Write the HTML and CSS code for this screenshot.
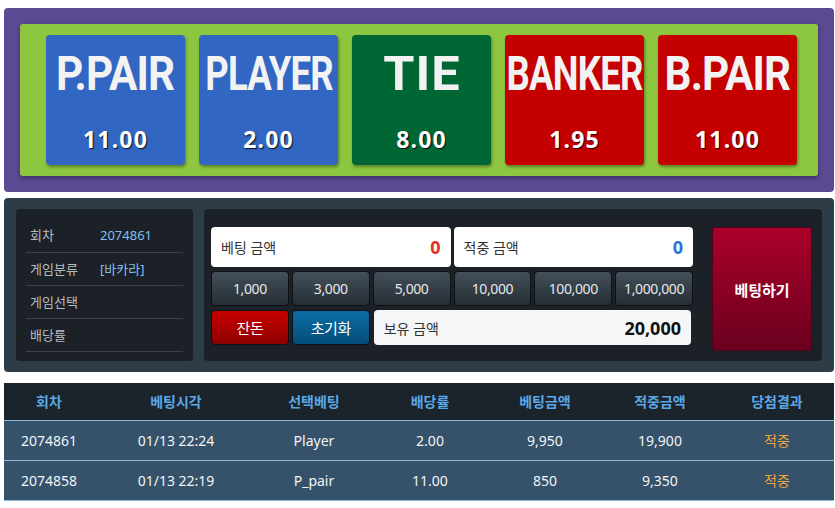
FILE: index.html
```html
<!DOCTYPE html>
<html lang="ko">
<head>
  <meta charset="UTF-8">
  <title>Baccarat Betting</title>
  <link rel="stylesheet" href="styles.css">
</head>
<body>

  <div class="board">
    <div class="board-inner">
      <div class="pick pick-blue">
        <div class="pick-name"><span class="squeeze pair">P.PAIR</span></div>
        <div class="pick-rate">11.00</div>
      </div>
      <div class="pick pick-blue">
        <div class="pick-name"><span class="squeeze">PLAYER</span></div>
        <div class="pick-rate">2.00</div>
      </div>
      <div class="pick pick-green">
        <div class="pick-name"><span class="squeeze wide">TIE</span></div>
        <div class="pick-rate">8.00</div>
      </div>
      <div class="pick pick-red">
        <div class="pick-name"><span class="squeeze">BANKER</span></div>
        <div class="pick-rate">1.95</div>
      </div>
      <div class="pick pick-red">
        <div class="pick-name"><span class="squeeze pair">B.PAIR</span></div>
        <div class="pick-rate">11.00</div>
      </div>
    </div>
  </div>

  <div class="bet-panel">
    <div class="info-card">
      <div class="info-row"><span class="info-label">회차</span><span class="info-value">2074861</span></div>
      <div class="info-row"><span class="info-label">게임분류</span><span class="info-value">[바카라]</span></div>
      <div class="info-row"><span class="info-label">게임선택</span><span class="info-value"></span></div>
      <div class="info-row"><span class="info-label">배당률</span><span class="info-value"></span></div>
    </div>

    <div class="slip-card">
      <div class="slip-grid">
        <div class="amount-box span-3"><span>베팅 금액</span><b class="val-red">0</b></div>
        <div class="amount-box span-3"><span>적중 금액</span><b class="val-blue">0</b></div>

        <button class="chip">1,000</button>
        <button class="chip">3,000</button>
        <button class="chip">5,000</button>
        <button class="chip">10,000</button>
        <button class="chip">100,000</button>
        <button class="chip">1,000,000</button>

        <button class="chip chip-red">잔돈</button>
        <button class="chip chip-blue">초기화</button>
        <div class="amount-box hold span-4"><span>보유 금액</span><b>20,000</b></div>
      </div>
      <button class="bet-btn">베팅하기</button>
    </div>
  </div>

  <table class="history">
    <colgroup>
      <col style="width:90px"><col style="width:164px"><col style="width:112px"><col style="width:120px">
      <col style="width:110px"><col style="width:120px"><col style="width:114px">
    </colgroup>
    <thead>
      <tr>
        <th>회차</th><th>베팅시각</th><th>선택베팅</th><th>배당률</th><th>베팅금액</th><th>적중금액</th><th>당첨결과</th>
      </tr>
    </thead>
    <tbody>
      <tr>
        <td>2074861</td><td>01/13 22:24</td><td>Player</td><td>2.00</td><td>9,950</td><td>19,900</td><td class="win">적중</td>
      </tr>
      <tr>
        <td>2074858</td><td>01/13 22:19</td><td>P_pair</td><td>11.00</td><td>850</td><td>9,350</td><td class="win">적중</td>
      </tr>
    </tbody>
  </table>

</body>
</html>
```

FILE: styles.css
```css
* {
  box-sizing: border-box;
  margin: 0;
  padding: 0;
}

body {
  font-family: "Noto Sans", "Noto Sans CJK KR", sans-serif;
  background: #fff;
  padding: 8px 1px 0 4px;
  color: #333;
}

/* top odds board */
.board {
  background-color: #594a93;
  border-radius: 4px;
  padding: 16px;
  height: 184px;
}

.board-inner {
  background-color: #8dc63f;
  border-radius: 3px;
  box-shadow: 0 2px 4px rgba(0, 0, 0, 0.35);
  height: 152px;
  display: flex;
  gap: 14px;
  padding: 11px 21px 11px 26px;
}

.pick {
  width: 139px;
  height: 130px;
  border-radius: 4px;
  box-shadow: 1px 2px 3px rgba(0, 0, 0, 0.35);
  display: flex;
  flex-direction: column;
  align-items: center;
  color: #f2f2f2;
}

.pick-blue { background-color: #3166c2; }
.pick-green { background-color: #006633; }
.pick-red { background-color: #c40000; }

.pick-name {
  height: 76px;
  display: flex;
  align-items: center;
  justify-content: center;
  font-family: Roboto, sans-serif;
  font-weight: 700;
  font-size: 48px;
  letter-spacing: -1px;
}

.squeeze {
  display: inline-block;
  transform: scaleX(0.76);
  white-space: nowrap;
}

.squeeze.pair {
  transform: scaleX(0.88);
}

.squeeze.wide {
  transform: scaleX(1.05);
  letter-spacing: 1px;
}

.pick-rate {
  font-size: 23px;
  font-weight: 700;
  letter-spacing: 1.2px;
  color: #fff;
  text-shadow: 1px 1px 1px rgba(0, 0, 0, 0.85);
  margin-top: 12px;
}

/* bet panel */
.bet-panel {
  margin-top: 6px;
  background-color: #2e3c47;
  border-radius: 4px;
  height: 174px;
  padding: 11px 12px;
  display: flex;
  gap: 11px;
}

.info-card {
  width: 178px;
  background-color: #1c2127;
  border-radius: 4px;
  padding: 10px 10px 0;
}

.info-row {
  height: 33px;
  border-bottom: 1px solid #3a4249;
  display: flex;
  align-items: center;
  font-size: 13px;
  padding-left: 4px;
  padding-bottom: 2px;
}

.info-row:first-child {
  height: 34px;
}

.info-label {
  width: 70px;
  color: #b7bcc1;
}

.info-value {
  color: #7ec0ec;
}

.slip-card {
  flex: 1;
  background-color: #1c2127;
  border-radius: 4px;
  padding: 18px 10px 0 7px;
  display: flex;
  align-items: flex-start;
}

.slip-grid {
  width: 482px;
  display: grid;
  grid-template-columns: repeat(6, 1fr);
  grid-template-rows: 40px 35px 35px;
  gap: 4px 3px;
}

.span-3 { grid-column: span 3; }
.span-4 { grid-column: span 4; }

.amount-box {
  background-color: #fff;
  border-radius: 4px;
  display: flex;
  align-items: center;
  justify-content: space-between;
  padding: 0 10px 0 10px;
  font-size: 14px;
  color: #333;
}

.amount-box b {
  font-size: 18px;
  font-weight: 700;
}

.amount-box .val-red { color: #e03226; }
.amount-box .val-blue { color: #2a74d6; }

.amount-box.hold {
  background-color: #f5f6f8;
  margin-left: 1px;
  margin-right: 2px;
}

.amount-box.hold b {
  color: #111;
}

.chip {
  background: linear-gradient(#434f5a, #262e35);
  border: 1px solid #0d1114;
  border-radius: 4px;
  color: #e4e7ea;
  font-family: inherit;
  font-size: 14px;
  letter-spacing: -0.4px;
  cursor: pointer;
}

.chip-red {
  background: linear-gradient(#c80000, #8e0000);
  color: #fff;
  font-size: 15px;
}

.chip-blue {
  background: linear-gradient(#0b6ea6, #054d78);
  color: #fff;
  font-size: 15px;
}

.bet-btn {
  margin-left: 19px;
  width: 100px;
  height: 124px;
  background: linear-gradient(#aa0029, #6b001f);
  border: 1px solid #55001a;
  border-radius: 3px;
  color: #fff;
  font-family: inherit;
  font-size: 15px;
  font-weight: 700;
  cursor: pointer;
}

/* history table */
.history {
  margin-top: 11px;
  width: 830px;
  border-collapse: collapse;
  table-layout: fixed;
  font-size: 14px;
}

.history th {
  background-color: #1b232b;
  color: #5aa8e6;
  font-weight: 700;
  height: 37px;
  text-align: center;
}

.history td {
  background-color: #35526a;
  color: #f2f4f6;
  height: 40px;
  text-align: center;
  border-top: 1px solid #8dbddb;
}

.history tr:last-child td {
  border-bottom: 1px solid #8dbddb;
}

.history td.win {
  color: #f2a43a;
}
```
